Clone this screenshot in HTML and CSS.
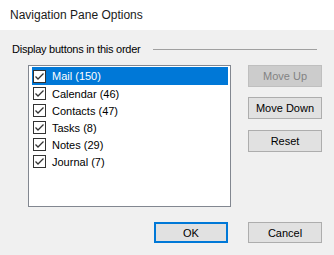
FILE: index.html
```html
<!DOCTYPE html>
<html lang="en">
<head>
    <meta charset="utf-8" />
    <title>Navigation Pane Options</title>
    <link rel="stylesheet" href="styles.css">
</head>
<body>
    <div class="dialog">
        <div class="title-bar">Navigation Pane Options</div>

        <div class="dialog-body">
            <div class="group-label">
                <span>Display buttons in this order</span>
                <span class="group-line"></span>
            </div>

            <div class="main-row">
                <ul class="item-list">
                    <li class="item selected"><svg class="check" viewBox="0 0 11 11"><path d="M1.5 5.5 L4 8 L9.5 2.5"/></svg>Mail (150)</li>
                    <li class="item"><svg class="check" viewBox="0 0 11 11"><path d="M1.5 5.5 L4 8 L9.5 2.5"/></svg>Calendar (46)</li>
                    <li class="item"><svg class="check" viewBox="0 0 11 11"><path d="M1.5 5.5 L4 8 L9.5 2.5"/></svg>Contacts (47)</li>
                    <li class="item"><svg class="check" viewBox="0 0 11 11"><path d="M1.5 5.5 L4 8 L9.5 2.5"/></svg>Tasks (8)</li>
                    <li class="item"><svg class="check" viewBox="0 0 11 11"><path d="M1.5 5.5 L4 8 L9.5 2.5"/></svg>Notes (29)</li>
                    <li class="item"><svg class="check" viewBox="0 0 11 11"><path d="M1.5 5.5 L4 8 L9.5 2.5"/></svg>Journal (7)</li>
                </ul>

                <div class="side-buttons">
                    <button class="btn" disabled>Move Up</button>
                    <button class="btn move-down">Move Down</button>
                    <button class="btn reset">Reset</button>
                </div>
            </div>

            <div class="footer">
                <button class="btn btn-default">OK</button>
                <button class="btn">Cancel</button>
            </div>
        </div>
    </div>
</body>
</html>
```

FILE: styles.css
```css
body {
    margin: 0;
    font-family: "Liberation Sans", Arial, sans-serif;
    font-size: 11px;
    color: #000;
    background: #f0f0f0;
}

.dialog {
    width: 334px;
    height: 255px;
    display: flex;
    flex-direction: column;
}

.title-bar {
    height: 30px;
    line-height: 30px;
    padding-left: 10px;
    font-size: 12px;
    background: #fff;
    color: #1a1a1a;
}

.dialog-body {
    flex: 1;
    background: #f0f0f0;
}

.group-label {
    display: flex;
    align-items: center;
    margin: 12px 17px 0 12px;
    height: 14px;
    letter-spacing: -0.25px;
}

.group-line {
    flex: 1;
    height: 1px;
    background: #a0a0a0;
    margin-left: 13px;
}

.main-row {
    display: flex;
    margin: 9px 0 0 28px;
}

.item-list {
    list-style: none;
    margin: 0;
    padding: 1px 2px 0 3px;
    width: 196px;
    height: 139px;
    background: #fff;
    border: 1px solid #828790;
}

.item {
    display: flex;
    align-items: center;
    height: 17px;
    padding-left: 1px;
}

.item.selected {
    background: #0078d7;
    color: #fff;
    height: 18px;
}

.check {
    width: 11px;
    height: 11px;
    border: 1px solid #333;
    background: #fff;
    margin-right: 6px;
    fill: none;
    stroke: #333;
    stroke-width: 1.3;
}

.side-buttons {
    display: flex;
    flex-direction: column;
    margin-left: 17px;
}

.btn {
    font-family: inherit;
    font-size: 11px;
    color: #000;
    width: 74px;
    height: 22px;
    padding: 0;
    background: #e1e1e1;
    border: 1px solid #adadad;
}

.btn:disabled {
    background: #cccccc;
    border-color: #bfbfbf;
    color: #838383;
}

.move-down {
    margin-top: 10px;
}

.reset {
    margin-top: 11px;
}

.footer {
    display: flex;
    justify-content: flex-end;
    gap: 20px;
    margin: 15px 12px 0 0;
}

.footer .btn {
    height: 21px;
}

.btn-default {
    border: 2px solid #0078d7;
}
```
